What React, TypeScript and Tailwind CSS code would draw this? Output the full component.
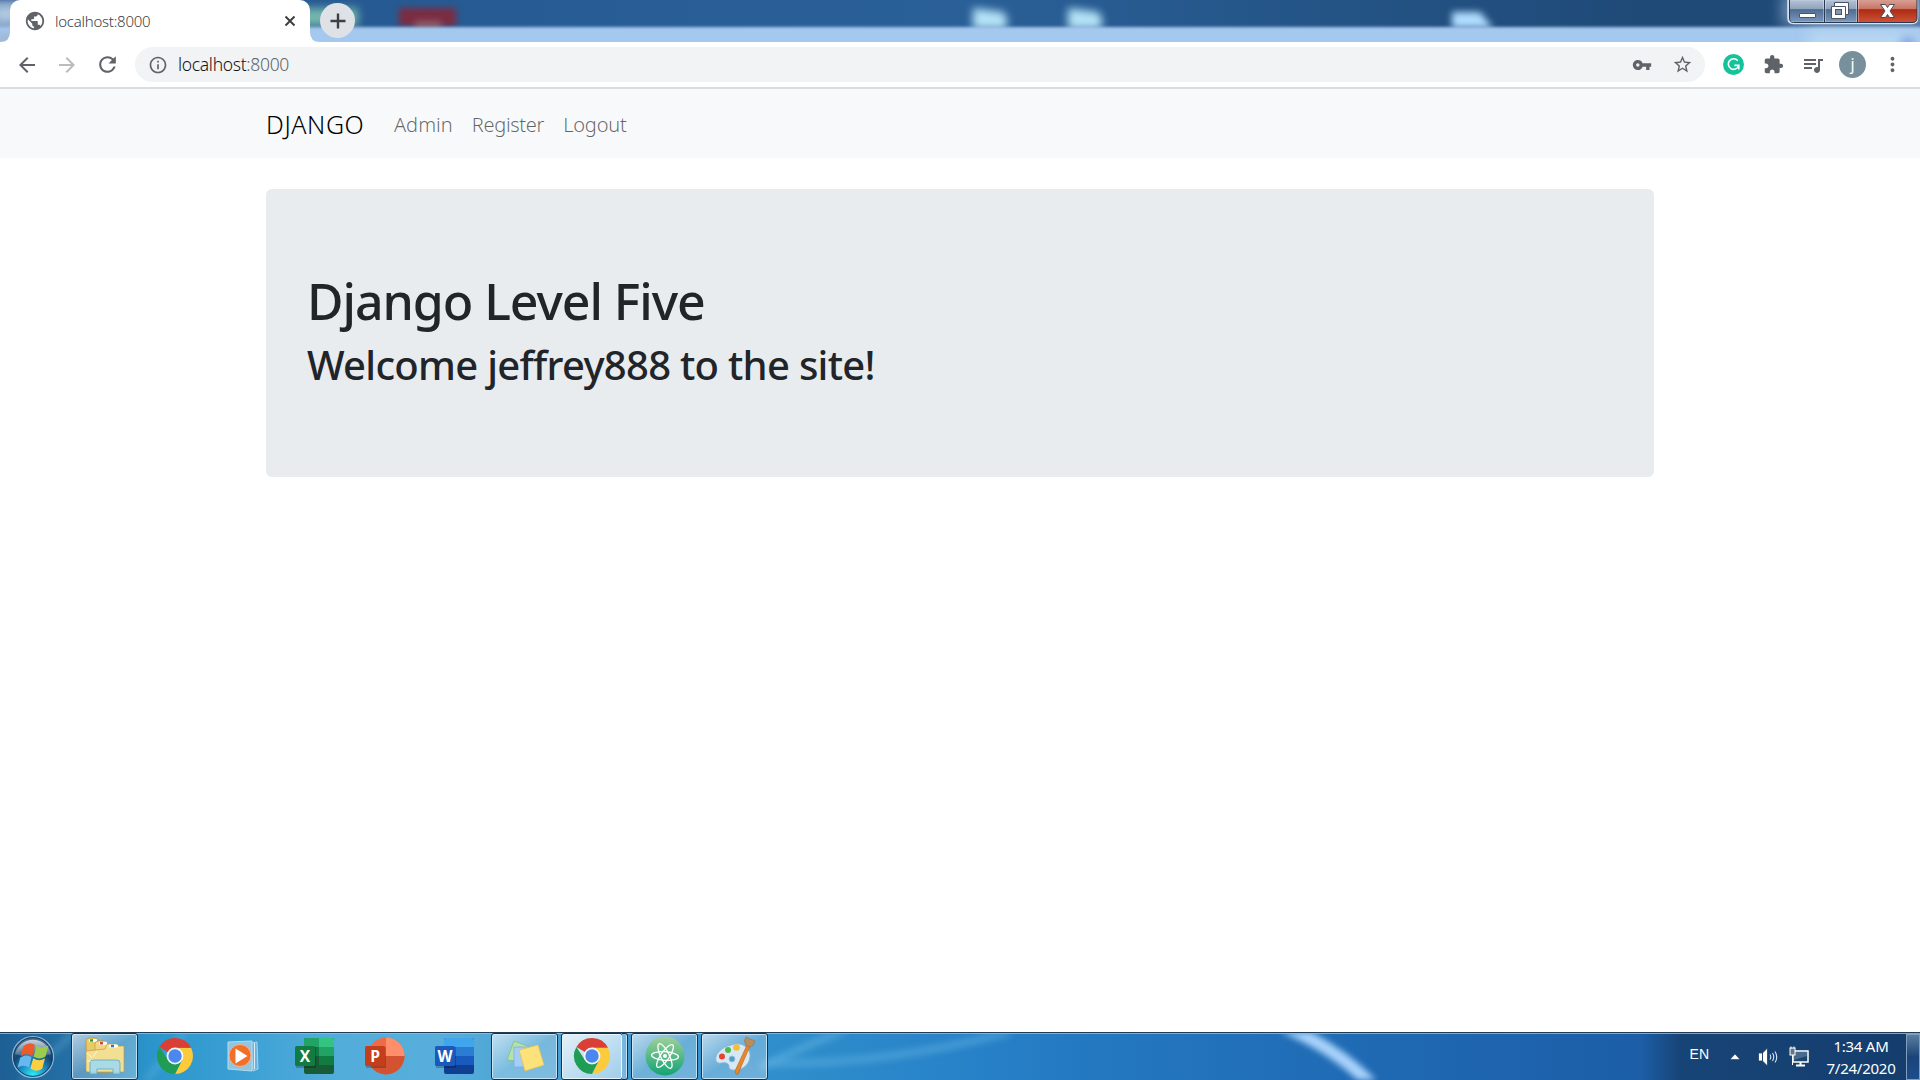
import type { ReactNode } from "react";
import {
  MdArrowBack,
  MdArrowForward,
  MdExtension,
  MdMoreVert,
  MdOutlineInfo,
  MdPublic,
  MdQueueMusic,
  MdRefresh,
  MdStarBorder,
  MdVpnKey,
} from "react-icons/md";

function TitleBackdrop() {
  return (
    <div className="absolute inset-0 overflow-hidden bg-linear-to-r from-[#24568f] via-[#2a6098] via-50% to-[#1f4a78] to-85%">
      <div className="absolute -left-4 top-0 h-12 w-40 bg-[#89a5ca] blur-[3px]" />
      <div className="absolute -left-1 top-2 h-3 w-5 bg-[#b4cfe2] blur-[4px]" />
      <div className="absolute left-[300px] top-2 h-[18px] w-[58px] bg-[#74b6ac] blur-[4px]" />
      <div className="absolute left-[399px] top-2 h-[18px] w-[57px] bg-[#7c2c42] blur-[3px]" />
      <div className="absolute left-[414px] top-[21px] h-2 w-7 rounded-full bg-[#8f5f68] blur-[3px]" />
      <svg className="absolute left-[960px] top-0 blur-[4px]" width="160" height="34">
        <path d="M13 8l30 4q6 5 3 17H13zM108 8l30 4q6 5 3 17h-33z" fill="#b4e2f6" />
      </svg>
      <svg className="absolute left-[1440px] top-0 blur-[3.500px]" width="70" height="34">
        <path d="M12 12h28l13 16H12z" fill="#b0dcff" />
      </svg>
      <div className="absolute left-[1782px] top-[-6px] h-8 w-[150px] bg-[#6f8fb5] blur-[7px]" />
      <div className="absolute inset-x-[-8px] top-[26.500px] h-8 bg-[#a4c8ee] blur-[1.500px]" />
      <div className="absolute right-0 top-[31px] h-5 w-28 bg-[#b9d7f1] blur-[7px]" />
      <div className="absolute right-1 top-[36px] h-4 w-4 rounded-full bg-[#86a8e2] blur-[4px]" />
      <div className="absolute bottom-[-6px] left-[-4px] h-4 w-5 bg-[#a0b9d8] blur-[3px]" />
    </div>
  );
}

function WindowControls() {
  return (
    <svg className="absolute right-0 top-0" width="134" height="26" viewBox="0 0 134 26">
      <defs>
        <linearGradient id="glass" x2="0" y2="1">
          <stop offset="0" stopColor="#b9c6d6" />
          <stop offset=".42" stopColor="#8ea3bc" />
          <stop offset=".44" stopColor="#4e6c8f" />
          <stop offset="1" stopColor="#7d9cc0" />
        </linearGradient>
        <linearGradient id="red" x2="0" y2="1">
          <stop offset="0" stopColor="#d9a398" />
          <stop offset=".42" stopColor="#c97362" />
          <stop offset=".44" stopColor="#ad2c13" />
          <stop offset="1" stopColor="#d0533a" />
        </linearGradient>
      </defs>
      <path d="M2.500-1V18q0 5 5 5H126q5 0 5-5V-1z" fill="url(#glass)" stroke="#d3e2f2" strokeWidth="2.500" />
      <path d="M72-1H131V18q0 5-5 5H72z" fill="url(#red)" />
      <path d="M3.500-1V18q0 4.500 4 4.500H126q5 0 5-4.500V-1M38.500 0V22.500M71.500 0V22.500" fill="none" stroke="#2b3950" />
      <path d="M39.500 0V22M37.500 0V22M70.500 0V22M72.500 0V22" stroke="#fff" opacity=".35" />
      <rect x="13.500" y="13.500" width="16" height="4" rx=".5" fill="#fff" stroke="#4c5566" />
      <path d="M48.500 2.500h14v12h-3v4h-14v-12h3z" fill="#fff" stroke="#4c5566" />
      <path d="M48.500 6.500h11v8" fill="none" stroke="#4c5566" />
      <rect x="49.500" y="9.500" width="6" height="5" fill="#8298b2" stroke="#4c5566" />
      <path d="M94.500 4.500h5l2 3 2-3h5l-4.500 6.500 4.500 6.500h-5l-2-3-2 3h-5l4.500-6.500z" fill="#fff" stroke="#4f4a57" />
    </svg>
  );
}

function BrowserTabs() {
  return (
    <div className="relative h-[42px]">
      <TitleBackdrop />
      <div className="relative flex h-full pl-[10px]">
        <div className="relative flex w-[300px] items-center rounded-t-[10px] bg-white pl-[14px] pr-[14px]">
          <svg className="absolute -left-2.5 bottom-0" width="10" height="10">
            <path d="M10 0v10H0Q10 10 10 0z" fill="#fff" />
          </svg>
          <svg className="absolute -right-2.5 bottom-0" width="10" height="10">
            <path d="M0 0v10h10Q0 10 0 0z" fill="#fff" />
          </svg>
          <MdPublic className="size-[22px] text-[#5f6368]" />
          <span className="ml-[9px] text-[15px] tracking-[-0.250px] text-[#3c4043] font-['Noto_Sans',sans-serif] font-light">localhost:8000</span>
          <svg className="ml-auto" width="12" height="12" viewBox="0 0 12 12">
            <path d="M1.500 1.500l9 9m0-9l-9 9" stroke="#3c4043" strokeWidth="2" />
          </svg>
        </div>
        <div className="ml-[10px] mt-[3px] flex size-[35px] items-center justify-center rounded-full bg-[#dee1e6]">
          <svg width="16" height="16" viewBox="0 0 16 16">
            <path d="M8 .5v15M.5 8h15" stroke="#3c4043" strokeWidth="2.400" />
          </svg>
        </div>
      </div>
      <WindowControls />
    </div>
  );
}

function Toolbar() {
  return (
    <div className="flex h-[47px] items-center border-b-2 border-[#dadce0] bg-white pl-[15px] text-[#5f6368]">
      <MdArrowBack className="size-[24px]" />
      <MdArrowForward className="ml-[16px] size-[24px] text-[#babcbe]" />
      <MdRefresh className="ml-[16px] size-[25px]" />
      <div className="ml-[15px] flex h-[35px] w-[1570px] items-center rounded-full bg-[#f1f3f4] pl-[12.500px] pr-[12px]">
        <MdOutlineInfo className="size-[20px]" />
        <span className="ml-[10.500px] text-[17.500px] tracking-[-0.310px] text-[#111214] font-['Noto_Sans',sans-serif] font-light">
          localhost<span className="text-[#5f6368]">:8000</span>
        </span>
        <MdVpnKey className="ml-auto size-[20px]" />
        <MdStarBorder className="ml-[20px] size-[21px]" />
      </div>
      <div className="ml-[17.500px] flex size-[21px] items-center justify-center rounded-full bg-[#15c39a]">
        <svg width="13" height="13" viewBox="0 0 13 13" fill="none" stroke="#fff" strokeWidth="1.600">
          <path d="M10.800 2.800A5.300 5.300 0 1 0 11.600 8M7.400 7.400h4.400v4" />
        </svg>
      </div>
      <MdExtension className="ml-[19px] size-[21px]" />
      <MdQueueMusic className="ml-[17px] size-[24px]" />
      <div className="ml-[14.500px] flex size-[27px] items-center justify-center rounded-full bg-[#78909c] pb-[2px] text-[16px] text-white font-['Noto_Sans',sans-serif]">j</div>
      <MdMoreVert className="ml-[15px] size-[23px]" />
    </div>
  );
}

function ChromeLogo() {
  return (
    <svg width="38" height="38" viewBox="0 0 38 38">
      <path d="M19 10.800H35A18 18 0 0 1 19 37L26.100 23.100z" fill="#fccb3c" />
      <path d="M3.410 10A18 18 0 0 1 35 10.800H19L11.900 14.900z" fill="#d93f35" />
      <path d="M3.410 10L11.900 23.100L26.100 23.100L19 37A18 18 0 0 1 3.410 10z" fill="#1f9d55" />
      <circle cx="19" cy="19" r="8.400" fill="#f3f6f7" />
      <circle cx="19" cy="19" r="6.700" fill="#4b87ee" />
    </svg>
  );
}

function StartOrb() {
  return (
    <svg className="ml-[2px]" width="46" height="46" viewBox="0 0 46 46">
      <defs>
        <radialGradient id="orb" cx=".5" cy=".95" r=".9">
          <stop offset="0" stopColor="#2ff0fa" />
          <stop offset=".35" stopColor="#1a8fc4" />
          <stop offset=".65" stopColor="#124673" />
          <stop offset="1" stopColor="#4d6f90" />
        </radialGradient>
        <linearGradient id="orbShine" x2="0" y2="1">
          <stop offset="0" stopColor="#fff" stopOpacity=".7" />
          <stop offset="1" stopColor="#fff" stopOpacity=".12" />
        </linearGradient>
      </defs>
      <circle cx="23" cy="23" r="20.500" fill="url(#orb)" stroke="#8fb9d8" strokeWidth="1.200" />
      <circle cx="23" cy="23" r="19.300" fill="none" stroke="#153b60" strokeWidth="1" />
      <path d="M5 20A18.500 18.500 0 0 1 41 20Q23 27 5 20z" fill="url(#orbShine)" />
      <path d="M13.500 12q6.500-5 11.500-1l-2.800 11q-5-4-11.500-.2z" fill="#ee5a2a" />
      <path d="M26.500 11.700q5.500 3.500 12-.2l-3 11q-6 4-11.800 0z" fill="#9ccc4b" />
      <path d="M10.300 23.500q6.500-4 11.300-.3l-2.700 10.300q-5-3.500-11.300 0z" fill="#68b7ef" />
      <path d="M23.200 24.200q6 4 11.800 0l-2.800 10.500q-6 4-11.800-.2z" fill="#fccf40" />
    </svg>
  );
}

function ExplorerIcon() {
  return (
    <svg width="42" height="40" viewBox="0 0 42 40">
      <path d="M2 5q0-3 3-3h7l2 3h6l1 31H3z" fill="#e8ca69" stroke="#b9953e" strokeWidth=".7" />
      <rect x="5" y="3" width="8" height="3" rx="1" fill="#fff" />
      <rect x="6" y="3.200" width="3" height="2.500" fill="#2f9b4c" />
      <path d="M11 8q0-3 3-3h8l2 3h8v28H11z" fill="#f0d67e" stroke="#bd9b46" strokeWidth=".7" />
      <rect x="15" y="6" width="8" height="3" rx="1" fill="#fff" />
      <rect x="16" y="6" width="3" height="2.500" fill="#d84530" />
      <path d="M2 15q10-1 19-2l2-5h9l2 2h6v26H4q-2 0-2-2z" fill="#f3df91" stroke="#bd9b46" strokeWidth=".7" />
      <rect x="25" y="8.500" width="9" height="3" rx="1" fill="#fff" />
      <rect x="27" y="8.700" width="3" height="2.500" fill="#3273c8" />
      <path d="M6 38V27q0-3 3-3h24q3 0 3 3v11h-7v-5H13v5z" fill="#9fd9ee" fillOpacity=".88" stroke="#5aa6c7" strokeWidth=".8" />
      <path d="M3 17l5 5m-5 3h4M13 15l-4 6" stroke="#fffbd8" strokeWidth="1" opacity=".8" />
    </svg>
  );
}

function MediaPlayerIcon() {
  return (
    <svg className="mr-[3px]" width="38" height="36" viewBox="0 0 38 36">
      <path d="M26 5l6-1 1 27-5 2z" fill="#6fb3da" stroke="#b9def2" strokeWidth=".8" />
      <path d="M29.500 5v26" stroke="#d9eefa" strokeWidth="1" />
      <path d="M3 4l24-1v30L3 31z" fill="#8ec6e3" stroke="#b5dbee" />
      <circle cx="15" cy="17.500" r="11" fill="#f0702a" stroke="#f7b48b" strokeWidth="1" />
      <path d="M10.500 10.500v15l12-7.500z" fill="#fff" />
    </svg>
  );
}

function OfficeIcon({ letter, tile, colors }: { letter: string; tile: string; colors: string[] }) {
  const round = letter === "P";
  return (
    <svg width="42" height="40" viewBox="0 0 42 40">
      {round ? (
        <>
          <circle cx="22" cy="20" r="18.500" fill={colors[0]} />
          <path d="M22 1.500A18.500 18.500 0 0 1 40.500 20H22z" fill={colors[1]} />
          <path d="M3.500 20a18.500 18.500 0 0 0 37 0z" fill={colors[2]} />
        </>
      ) : (
        <>
          <rect x="10" y="2" width="30" height="36" rx="2" fill={colors[3]} />
          <path d="M10 4q0-2 2-2h26q2 0 2 2v7H10z" fill={colors[0]} />
          <rect x="10" y="11" width="30" height="9" fill={colors[1]} />
          <rect x="10" y="20" width="30" height="9" fill={colors[2]} />
          {letter === "X" && (
            <>
              <path d="M25 2h13q2 0 2 2v7H25z" fill="#33c481" />
              <path d="M25 11h15v9H25z" fill="#21a366" />
              <path d="M10 11h15v9H10z" fill="#107c41" />
              <path d="M10 20h15v9H10z" fill="#185c37" />
            </>
          )}
        </>
      )}
      <rect x="2" y="11" width="20" height="21" fill="#000" opacity=".22" />
      <rect x="1" y="10" width="20" height="20" rx="1.500" fill={tile} />
      <text x="11" y="25.500" textAnchor="middle" fill="#fff" fontFamily="Open Sans, sans-serif" fontWeight="700" fontSize="15.500">
        {letter}
      </text>
    </svg>
  );
}

function StickyNotesIcon() {
  return (
    <svg width="40" height="34" viewBox="0 0 40 34">
      <path d="M9 2l16 6-6 15L2 21z" fill="#b5e2a8" stroke="#7fc27c" strokeWidth=".8" />
      <path d="M9 8l16 0v20H9z" fill="#a5cdf5" stroke="#78aee4" strokeWidth=".8" />
      <path d="M14 11l19-5 6 20-19 6z" fill="#fde27c" stroke="#e6c053" strokeWidth=".8" />
    </svg>
  );
}

function AtomIcon() {
  return (
    <svg width="42" height="42" viewBox="0 0 42 42">
      <defs>
        <linearGradient id="atom" x2="0" y2="1">
          <stop offset="0" stopColor="#9fd09a" />
          <stop offset="1" stopColor="#12a473" />
        </linearGradient>
      </defs>
      <circle cx="21" cy="21" r="19.500" fill="url(#atom)" />
      <g fill="none" stroke="#fff" strokeWidth="1.300">
        <ellipse cx="21" cy="21" rx="13.500" ry="4.300" transform="rotate(4 21 21)" />
        <ellipse cx="21" cy="21" rx="13.500" ry="4.300" transform="rotate(64 21 21)" />
        <ellipse cx="21" cy="21" rx="13.500" ry="4.300" transform="rotate(124 21 21)" />
      </g>
      <circle cx="21" cy="21" r="2" fill="#fff" />
    </svg>
  );
}

function PaintIcon() {
  return (
    <svg width="42" height="40" viewBox="0 0 42 40">
      <path d="M17 9C28 5 37 12 36 21c-1 9-9 14-18 13-5-1-1-6-6-7-4-1-8 2-10-2C0 18 8 11 17 9z" fill="#d5e9f5" stroke="#8bb5d3" />
      <circle cx="18" cy="23" r="3" fill="#4d9fcf" stroke="#9cc2dc" />
      <circle cx="8" cy="20.500" r="3" fill="#e8432f" />
      <circle cx="14" cy="14" r="3" fill="#55b948" />
      <circle cx="22.500" cy="11.500" r="3.300" fill="#f7bd30" />
      <path d="M33 9l3 1-12 28q-3 1-3-3z" fill="#e8872a" stroke="#b96319" strokeWidth=".6" />
      <path d="M32 9q-3-4 0-8l9 4q-1 5-5 6z" fill="#b98d5e" stroke="#8f6a43" strokeWidth=".5" />
    </svg>
  );
}

function TaskButton({ children, active = false, framed = true }: { children: ReactNode; active?: boolean; framed?: boolean }) {
  if (!framed) {
    return <div className="flex h-[47px] w-[70px] items-center justify-center pb-px">{children}</div>;
  }
  return (
    <div className="flex h-[47px] w-[70px] pl-px">
      <div
        className={
          active
            ? "flex h-[47px] w-[62px] items-center justify-center rounded-[3px] border border-[#14304a] bg-linear-to-br from-[#e4f1f8] to-[#9fcdea] pb-px shadow-[inset_0_0_0_1px_#eaf6fd]"
            : "flex h-[47px] w-[67px] items-center justify-center rounded-[3px] border border-[#14304a] bg-linear-to-br from-white/65 via-white/25 via-50% to-white/30 pb-px shadow-[inset_0_0_0_1px_rgba(215,238,252,0.8)]"
        }
      >
        {children}
      </div>
      {active && <div className="-ml-px h-[47px] w-[6px] rounded-r-[3px] border border-l-0 border-[#14304a] bg-[#79b5dc] shadow-[inset_-1px_0_0_#c4e3f6]" />}
    </div>
  );
}

function TaskbarBackdrop() {
  return (
    <div className="absolute inset-0 overflow-hidden bg-[linear-gradient(90deg,#1d5f95_0px,#2470a6_70px,#2b95cb_150px,#3ba0d4_240px,#52acda_330px,#57aedb_440px,#3f97cc_620px,#2f8ecb_780px,#2781c8_980px,#2378c0_1100px,#1f68b2_1400px,#1c5ea8_1640px,#174477_1680px,#143d6d_1920px)]">
      <svg className="absolute inset-0 blur-[3px]" width="1920" height="48" fill="none">
        <path d="M760 36Q790 20 850 -4" stroke="#5baee0" strokeWidth="8" opacity=".6" />
        <path d="M766 31Q880 34 1010 0" stroke="#5baee0" strokeWidth="9" opacity=".5" />
        <path d="M20 50L75 0M145 50L185 0" stroke="#84c4e2" strokeWidth="7" opacity=".25" />
        <path d="M1283 -6Q1337 16 1375 56" stroke="#a8d2fb" strokeWidth="13" />
      </svg>
      <div className="absolute inset-x-0 top-0 h-px bg-[#213c55]" />
      <div className="absolute inset-x-0 top-px h-px bg-[#90bfe2]/80" />
    </div>
  );
}

function SystemTray() {
  return (
    <div className="ml-auto flex h-full items-center text-white font-['Noto_Sans',sans-serif]">
      <span className="mb-[5px] text-[14px] font-['Liberation_Sans',sans-serif]">EN</span>
      <svg className="ml-[20px] mt-px" width="12" height="8" viewBox="0 0 12 8">
        <path d="M6 1l5 5.500H1z" fill="#fff" stroke="#0d2747" strokeWidth=".5" />
      </svg>
      <svg className="ml-[16px]" width="22" height="20" viewBox="0 0 22 20">
        <path d="M1.500 6h4v8h-4zM5.500 6l5-5v18l-5-5z" fill="#fff" stroke="#22405f" strokeWidth=".8" />
        <path d="M13 7.500q1.500 2.500 0 5M15.500 6q2.500 4 0 8M18 4.500q3.500 5.500 0 11" fill="none" stroke="#d7e5f2" strokeWidth="1.100" />
      </svg>
      <svg className="ml-[9px]" width="22" height="22" viewBox="0 0 22 22">
        <rect x="5" y="5" width="15" height="11" fill="#1d456f" stroke="#fff" strokeWidth="1.500" />
        <path d="M6 6h13v4L6 14z" fill="#fff" opacity=".2" />
        <path d="M12.500 16v3M8 19.500h9" stroke="#fff" strokeWidth="2" />
        <rect x="2" y="2" width="5" height="7" fill="#657688" stroke="#fff" />
        <path d="M4.500 9v10M3 .5v2M6 .5v2" stroke="#fff" />
      </svg>
      <div className="ml-[16px] flex w-[70px] flex-col items-center text-[15px] leading-[22px] tracking-[-0.250px]">
        <span>1:34 AM</span>
        <span>7/24/2020</span>
      </div>
      <div className="ml-[10px] mt-px h-[46px] w-[14px] border border-[#7f9fbd] bg-linear-to-b from-[#5b7da0] via-[#1a4478] via-50% to-[#1c4d8c]" />
    </div>
  );
}

function Taskbar() {
  return (
    <div className="relative h-[48px]">
      <TaskbarBackdrop />
      <div className="relative flex h-full items-start pl-[8px] pt-px">
        <div className="flex h-[47px] w-[62px] items-center">
          <StartOrb />
        </div>
        <TaskButton><ExplorerIcon /></TaskButton>
        <TaskButton framed={false}><ChromeLogo /></TaskButton>
        <TaskButton framed={false}><MediaPlayerIcon /></TaskButton>
        <TaskButton framed={false}><OfficeIcon letter="X" tile="#127b42" colors={["#21a366", "#21a366", "#107c41", "#185c37"]} /></TaskButton>
        <TaskButton framed={false}><OfficeIcon letter="P" tile="#c43e1c" colors={["#ed6c47", "#ff8f6b", "#d35230"]} /></TaskButton>
        <TaskButton framed={false}><OfficeIcon letter="W" tile="#185abd" colors={["#41a5ee", "#2b7cd3", "#185abd", "#103f91"]} /></TaskButton>
        <TaskButton><StickyNotesIcon /></TaskButton>
        <TaskButton active><ChromeLogo /></TaskButton>
        <TaskButton><AtomIcon /></TaskButton>
        <TaskButton><PaintIcon /></TaskButton>
        <SystemTray />
      </div>
    </div>
  );
}

function Page() {
  return (
    <div className="flex-1 bg-white font-['Noto_Sans',sans-serif]">
      <nav className="flex h-[69px] items-center bg-[#f8f9fa] pl-[266px] pt-[2px]">
        <a className="text-[25px] tracking-[0.600px] font-light text-black">DJANGO</a>
        <div className="ml-[29.500px] flex gap-[19px] text-[20px] font-light text-black/60">
          <a className="tracking-[0.050px]">Admin</a>
          <a className="tracking-[-0.300px]">Register</a>
          <a className="tracking-[-0.200px]">Logout</a>
        </div>
      </nav>
      <main className="ml-[266px] mt-[31px] h-[288px] w-[1388px] rounded-[6px] bg-[#e9ecef] px-[41px] pt-[82px] text-[#212529]">
        <h1 className="mb-[10px] text-[50px] leading-[60px] tracking-[-1.050px] font-medium">Django Level Five</h1>
        <h2 className="text-[40px] leading-[48px] tracking-[-0.720px] font-medium">Welcome jeffrey888 to the site!</h2>
      </main>
    </div>
  );
}

export default function App() {
  return (
    <div className="flex h-[1080px] w-[1920px] flex-col overflow-hidden">
      <BrowserTabs />
      <Toolbar />
      <Page />
      <Taskbar />
    </div>
  );
}
